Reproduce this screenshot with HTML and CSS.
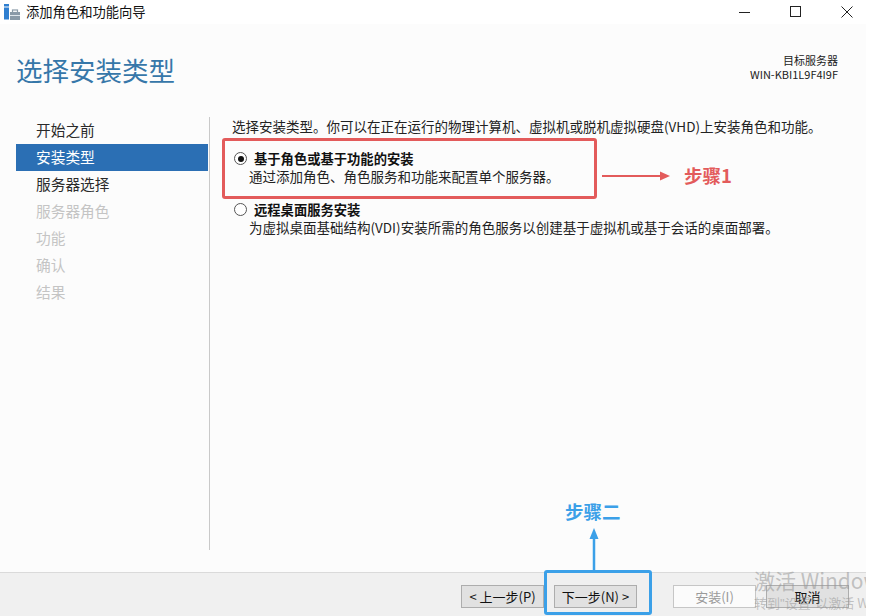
FILE: index.html
```html
<!DOCTYPE html>
<html lang="zh-CN">
<head>
<meta charset="utf-8">
<title>添加角色和功能向导</title>
<link rel="stylesheet" href="styles.css">
</head>
<body>
<div class="window">
  <div class="titlebar">
    <svg class="app-icon" width="17" height="16" viewBox="0 0 17 16">
      <rect x="1" y="0" width="5" height="2.5" fill="#2f7fd0"/>
      <rect x="1" y="3.5" width="5" height="12" fill="#2f7fd0"/>
      <rect x="7" y="8" width="10" height="8" fill="#8a9aa8"/>
      <rect x="9.5" y="6" width="5" height="2.5" fill="none" stroke="#8a9aa8" stroke-width="1.2"/>
      <rect x="7" y="11" width="10" height="1" fill="#dfe6ec"/>
    </svg>
    <span class="title-text">添加角色和功能向导</span>
    <div class="controls">
      <span class="ctl"><svg width="12" height="12" viewBox="0 0 12 12"><line x1="0" y1="6.5" x2="11" y2="6.5" stroke="#222" stroke-width="1"/></svg></span>
      <span class="ctl"><svg width="12" height="12" viewBox="0 0 12 12"><rect x="0.5" y="0.5" width="10" height="10" fill="none" stroke="#222" stroke-width="1"/></svg></span>
      <span class="ctl"><svg width="12" height="12" viewBox="0 0 12 12"><path d="M0.5 0.5 L11.5 11.5 M11.5 0.5 L0.5 11.5" stroke="#222" stroke-width="1"/></svg></span>
    </div>
  </div>

  <div class="header">
    <h1 class="page-title">选择安装类型</h1>
    <div class="target">
      <div>目标服务器</div>
      <div>WIN-KBI1L9F4I9F</div>
    </div>
  </div>

  <div class="body">
    <ul class="nav">
      <li>开始之前</li>
      <li class="active">安装类型</li>
      <li>服务器选择</li>
      <li class="disabled">服务器角色</li>
      <li class="disabled">功能</li>
      <li class="disabled">确认</li>
      <li class="disabled">结果</li>
    </ul>
    <div class="divider"></div>
    <div class="main">
      <p class="intro">选择安装类型。你可以在正在运行的物理计算机、虚拟机或脱机虚拟硬盘(VHD)上安装角色和功能。</p>
      <div class="option">
        <span class="radio checked"></span>
        <div class="opt-text">
          <div class="opt-label">基于角色或基于功能的安装</div>
          <div class="opt-desc">通过添加角色、角色服务和功能来配置单个服务器。</div>
        </div>
      </div>
      <div class="option second">
        <span class="radio"></span>
        <div class="opt-text">
          <div class="opt-label">远程桌面服务安装</div>
          <div class="opt-desc">为虚拟桌面基础结构(VDI)安装所需的角色服务以创建基于虚拟机或基于会话的桌面部署。</div>
        </div>
      </div>

      <div class="red-box"></div>
      <svg class="red-arrow" width="72" height="12" viewBox="0 0 72 12">
        <line x1="0" y1="6" x2="62" y2="6" stroke="#e35b5b" stroke-width="2"/>
        <path d="M58 1.5 L68 6 L58 10.5 Z" fill="#e35b5b"/>
      </svg>
      <div class="step1">步骤1</div>
      <div class="step2">步骤二</div>
      <svg class="blue-arrow" width="12" height="46" viewBox="0 0 12 46">
        <line x1="6" y1="8" x2="6" y2="46" stroke="#3ba0e8" stroke-width="2.5"/>
        <path d="M1.5 11 L6 0 L10.5 11 Z" fill="#3ba0e8"/>
      </svg>
    </div>
  </div>

  <div class="footer">
    <button class="btn">&lt; 上一步(P)</button>
    <button class="btn">下一步(N) &gt;</button>
    <button class="btn disabled-btn gap">安装(I)</button>
    <button class="btn">取消</button>
    <div class="blue-box"></div>
    <div class="watermark">
      <div class="wm1">激活 Windows</div>
      <div class="wm2">转到<span class="q">"</span>设置<span class="q">"</span>以激活 Windows。</div>
    </div>
  </div>
</div>
</body>
</html>
```

FILE: styles.css
```css
* { box-sizing: border-box; }
html, body {
  margin: 0;
  padding: 0;
  background: #ffffff;
  width: 872px;
  height: 616px;
  overflow: hidden;
}
body {
  font-family: "Noto Sans CJK SC", "Noto Sans", "Liberation Sans", sans-serif;
  color: #1e1e1e;
}
.window {
  width: 872px;
  height: 616px;
  display: flex;
  flex-direction: column;
  overflow: hidden;
  position: relative;
  background: #ffffff;
}
.titlebar {
  height: 24px;
  background: #ffffff;
  display: flex;
  align-items: center;
  padding-left: 3px;
}
.app-icon { flex: none; margin-top: 0; }
.title-text {
  margin-left: 6px;
  font-size: 13.3px;
  line-height: 22px;
  color: #111;
}
.controls {
  margin-left: auto;
  display: flex;
  align-items: center;
}
.ctl {
  width: 51px;
  height: 22px;
  display: flex;
  align-items: center;
  justify-content: center;
}
.header,
.body,
.footer {
  margin-right: 6px;
}
.header {
  background: #fcfcfc;
  height: 93px;
  display: flex;
  justify-content: space-between;
  align-items: flex-start;
  padding: 0 28px 0 16px;
}
.page-title {
  margin: 29px 0 0 0;
  font-size: 26.5px;
  font-weight: 400;
  line-height: 34px;
  color: #3677a9;
}
.target {
  margin-top: 29px;
  text-align: right;
  font-size: 11px;
  line-height: 14px;
  color: #222;
}
.body {
  flex: 1;
  background: #fcfcfc;
  display: flex;
  position: relative;
}
.nav {
  list-style: none;
  margin: 0 0 0 16px;
  padding: 0;
  width: 192px;
}
.nav li {
  height: 27px;
  line-height: 26px;
  padding-left: 20px;
  font-size: 14.7px;
  color: #2a2a2a;
}
.nav li.active {
  background: #2b6fb4;
  color: #ffffff;
}
.nav li.disabled { color: #c4c4c4; }
.divider {
  width: 1px;
  background: #c9c9c9;
  margin-left: 1px;
  height: 433px;
}
.main {
  flex: 1;
  padding-left: 22px;
  position: relative;
}
.intro {
  margin: 0;
  font-size: 13.5px;
  line-height: 18px;
  color: #222;
}
.option {
  display: flex;
  align-items: flex-start;
  margin-top: 15px;
  padding-left: 2px;
}
.radio {
  flex: none;
  width: 13px;
  height: 13px;
  border: 1px solid #555;
  border-radius: 50%;
  margin-top: 2px;
  position: relative;
  background: #fff;
}
.radio.checked::after {
  content: "";
  position: absolute;
  left: 2.5px;
  top: 2.5px;
  width: 6px;
  height: 6px;
  border-radius: 50%;
  background: #111;
}
.opt-text { margin-left: 6px; }
.opt-label {
  font-size: 13.3px;
  font-weight: 700;
  line-height: 17px;
  margin-left: 1px;
  color: #111;
}
.opt-desc {
  font-size: 13.5px;
  line-height: 19px;
  margin-left: -4px;
  color: #222;
}
.red-box {
  position: absolute;
  left: 12px;
  top: 21px;
  width: 375px;
  height: 61px;
  border: 3px solid #e35b5b;
  border-radius: 3px;
}
.red-arrow {
  position: absolute;
  left: 392px;
  top: 53px;
}
.step1 {
  position: absolute;
  left: 474px;
  top: 46px;
  font-size: 18.5px;
  font-weight: 700;
  line-height: 24px;
  color: #e35b5b;
}
.step2 {
  position: absolute;
  left: 355px;
  top: 382px;
  font-size: 18.5px;
  font-weight: 700;
  line-height: 24px;
  color: #3ba0e8;
}
.blue-arrow {
  position: absolute;
  left: 378px;
  top: 411px;
}
.footer {
  height: 44px;
  flex: none;
  background: #f0f0f0;
  border-top: 1px solid #dadada;
  display: flex;
  justify-content: flex-end;
  align-items: flex-start;
  padding: 12px 17px 0 0;
  position: relative;
}
.btn {
  width: 83px;
  height: 23px;
  margin-left: 10px;
  background: #e1e1e1;
  border: 1px solid #adadad;
  font-family: "Noto Sans CJK SC", "Noto Sans", "Liberation Sans", sans-serif;
  font-size: 13px;
  line-height: 19px;
  color: #111;
  padding: 0;
  position: relative;
  z-index: 1;
}
.btn.gap { margin-left: 36px; }
.disabled-btn {
  background: #fbfbfb;
  border-color: #c6c6c6;
  color: #9a9a9a;
}
.blue-box {
  position: absolute;
  left: 544px;
  top: -3px;
  width: 108px;
  height: 45px;
  border: 3px solid #3ba0e8;
  border-radius: 3px;
  z-index: 2;
}
.watermark {
  position: absolute;
  left: 754px;
  top: -6px;
  width: 112px;
  overflow: hidden;
  white-space: nowrap;
  color: rgba(150, 150, 150, 0.55);
  z-index: 3;
  pointer-events: none;
}
.wm1 {
  font-size: 21px;
  line-height: 26px;
}
.wm2 {
  font-size: 13px;
  line-height: 18px;
  margin-top: 1px;
}
.q { font-family: "Liberation Sans", sans-serif; }
```
